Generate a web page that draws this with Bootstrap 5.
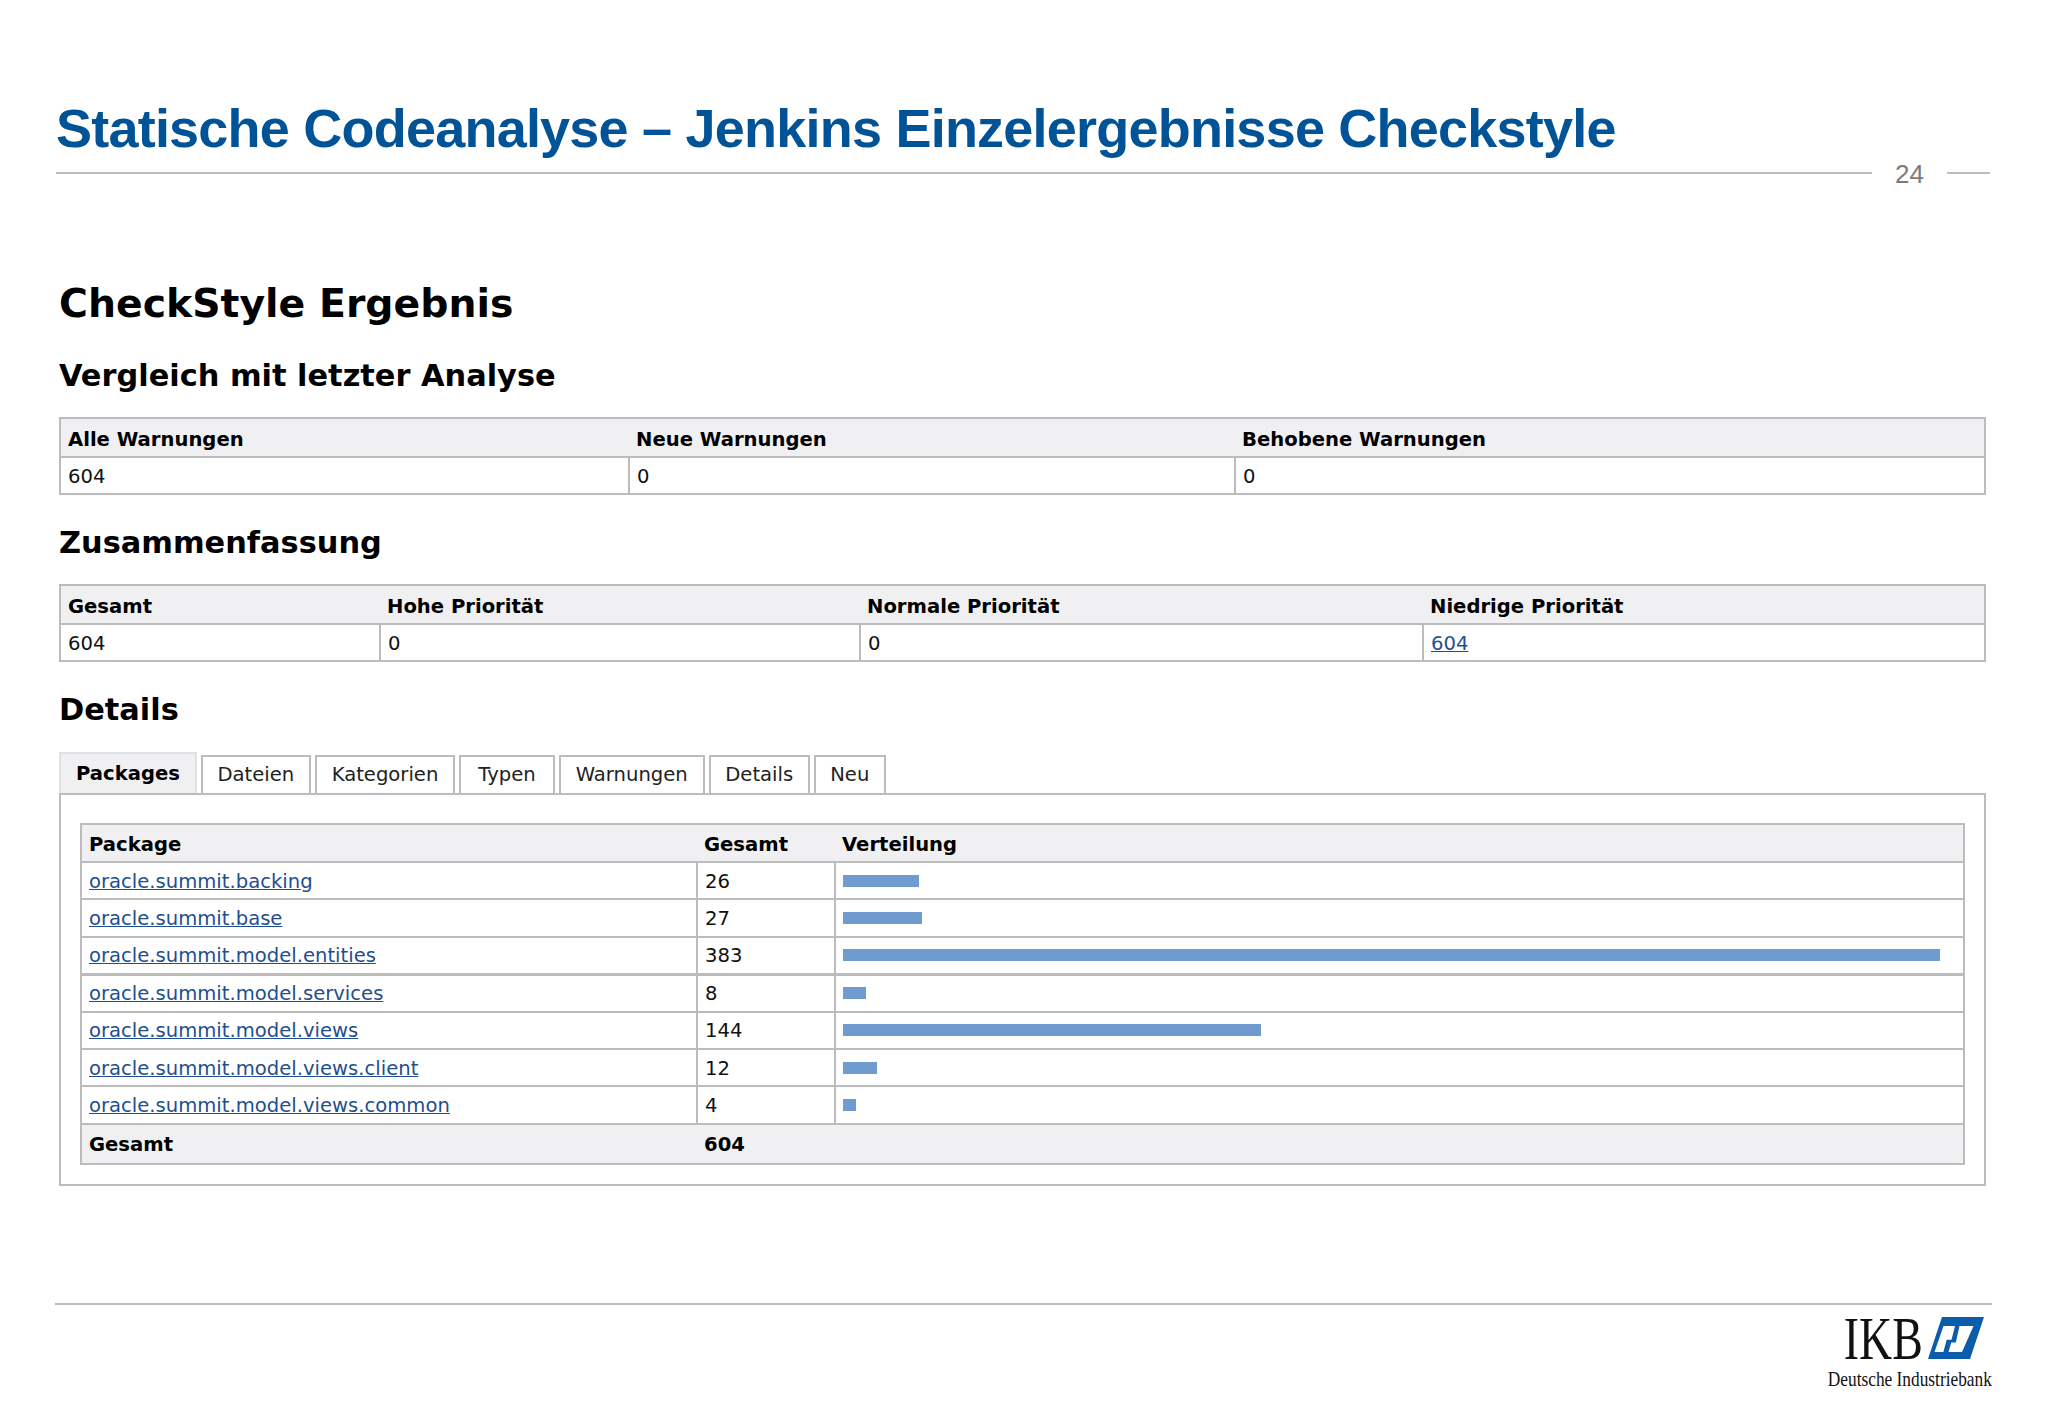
<!DOCTYPE html>
<html lang="de">
<head>
<meta charset="utf-8">
<title>Statische Codeanalyse</title>
<link href="https://cdn.jsdelivr.net/npm/bootstrap@5.3.0/dist/css/bootstrap.min.css" rel="stylesheet">
<style>
html,body{height:1418px;overflow:hidden;background:#fff}
.slide{height:1418px;padding:0 56px;display:flex;flex-direction:column;font-family:"DejaVu Sans",sans-serif;color:#111}
.slide-title{font:700 54px/62px "Liberation Sans",sans-serif;letter-spacing:-.78px;color:#005396;margin:97px 0 0}
.rule-row{display:flex;align-items:center;height:28px;margin-top:0;margin-right:-2px}
.rule{height:2px;background:#bcbcbc}
.rule-a{width:1816px}.rule-b{width:43px}
.page-no{width:75px;text-align:center;font:26px/28px "Liberation Sans",sans-serif;color:#7b7b7b;padding-top:2px}
.report{margin:0 -21px 0 3px;width:1927px}
.report h1{font-weight:700;font-size:39.4px;line-height:40px;margin:96px 0 0;color:#000;letter-spacing:0}
.report h2{font-weight:700;font-size:30.4px;line-height:32px;margin:0;color:#000}
.h-a{margin-top:37px !important}.h-b{margin-top:32px !important}.h-c{margin-top:32px !important}
.rt{table-layout:fixed;width:100%;margin:0;border-collapse:collapse;font-size:19.6px;color:#111}
.rt>*>tr>*{border:2px solid #bcbcbc;padding:2px 7px 0;vertical-align:middle;background:#fff;box-shadow:none;color:#111;line-height:22px}
.rt>thead>tr>th,.rt>tfoot>tr>*{background:#f0f0f2;font-weight:700;color:#000}
.rt>thead>tr>th{border-left-width:0;border-right-width:0;padding-top:4px}
.rt>thead>tr>th:first-child{border-left-width:2px}
.rt>thead>tr>th:last-child{border-right-width:2px}
.rt>tfoot>tr>*{border-left-width:0;border-right-width:0;padding-top:3px}
.rt>tfoot>tr>*:first-child{border-left-width:2px}
.rt>tfoot>tr>*:last-child{border-right-width:2px}
.t-top{margin-top:25px}
.t-top thead tr{height:39px}.t-top tbody tr{height:37px}
.c1a{width:569px}.c1b{width:606px}
.c2a{width:320px}.c2b{width:480px}.c2c{width:563px}
.rt a{color:#1f4f8f}
.tabs-row{margin-top:26px;border:0;gap:4px;align-items:flex-end;--bs-nav-tabs-border-width:0}
.tabs-row .nav-link{height:38px;padding:0 15px;font-size:19.6px;line-height:36px;color:#222;border:2px solid #bcbcbc;border-bottom:0;border-radius:0;background:#fff;margin:0}
.tabs-row .nav-link.active{height:41px;padding:0 15px;background:#f0f0f2;color:#000;font-weight:700;line-height:40px;border-right-width:2px}
.tabs-row .nav-link.tab-wide{padding:0 17px}
.tabs-row .nav-link.tab-tight{padding:0 14.5px}
.panel-box{border:2px solid #bcbcbc;padding:28px 19px 20px;height:393px}
.panel-box .rt>thead>tr{height:38px}
.panel-box .rt>tbody>tr{height:37.4px}
.panel-box .rt>tfoot>tr{height:40px}
.c3a{width:616px}.c3b{width:138px}
.heavy>td{border-bottom-width:3px !important}
.dist-bar{height:12px;background:#6f9bcf;margin-top:-2px}
.foot-rule{height:2px;background:#bcbcbc;margin-top:117px;margin-left:-1px}
.logo{align-self:flex-end;width:165px;display:flex;flex-direction:column;align-items:flex-end;font-family:"Liberation Serif",serif;color:#111}
.logo-top{display:flex;align-items:center;gap:5px;height:46px;margin-top:10px;margin-right:8px}
.logo-ikb{font-size:62px;line-height:46px;display:inline-block;transform:scaleX(.74);transform-origin:right center;letter-spacing:0}
.logo-sub{font-size:21px;line-height:24px;white-space:nowrap;transform:scaleX(.825);transform-origin:right center;margin-top:6px}
</style>
</head>
<body>
<div class="slide">
  <h1 class="slide-title">Statische Codeanalyse – Jenkins Einzelergebnisse Checkstyle</h1>
  <div class="rule-row"><div class="rule rule-a"></div><div class="page-no">24</div><div class="rule rule-b"></div></div>
  <div class="report">
    <h1>CheckStyle Ergebnis</h1>
    <h2 class="h-a">Vergleich mit letzter Analyse</h2>
    <table class="table rt t-top">
      <colgroup><col class="c1a"><col class="c1b"><col></colgroup>
      <thead><tr><th>Alle Warnungen</th><th>Neue Warnungen</th><th>Behobene Warnungen</th></tr></thead>
      <tbody><tr><td>604</td><td>0</td><td>0</td></tr></tbody>
    </table>
    <h2 class="h-b">Zusammenfassung</h2>
    <table class="table rt t-top">
      <colgroup><col class="c2a"><col class="c2b"><col class="c2c"><col></colgroup>
      <thead><tr><th>Gesamt</th><th>Hohe Priorität</th><th>Normale Priorität</th><th>Niedrige Priorität</th></tr></thead>
      <tbody><tr><td>604</td><td>0</td><td>0</td><td><a href="#">604</a></td></tr></tbody>
    </table>
    <h2 class="h-c">Details</h2>
    <ul class="nav nav-tabs tabs-row">
      <li class="nav-item"><a class="nav-link active" href="#">Packages</a></li>
      <li class="nav-item"><a class="nav-link tab-tight" href="#">Dateien</a></li>
      <li class="nav-item"><a class="nav-link" href="#">Kategorien</a></li>
      <li class="nav-item"><a class="nav-link tab-wide" href="#">Typen</a></li>
      <li class="nav-item"><a class="nav-link" href="#">Warnungen</a></li>
      <li class="nav-item"><a class="nav-link tab-tight" href="#">Details</a></li>
      <li class="nav-item"><a class="nav-link tab-tight" href="#">Neu</a></li>
    </ul>
    <div class="panel-box">
      <table class="table rt">
        <colgroup><col class="c3a"><col class="c3b"><col></colgroup>
        <thead><tr><th>Package</th><th>Gesamt</th><th>Verteilung</th></tr></thead>
        <tbody>
          <tr><td><a href="#">oracle.summit.backing</a></td><td>26</td><td><div class="dist-bar" style="width:76px"></div></td></tr>
          <tr><td><a href="#">oracle.summit.base</a></td><td>27</td><td><div class="dist-bar" style="width:79px"></div></td></tr>
          <tr class="heavy"><td><a href="#">oracle.summit.model.entities</a></td><td>383</td><td><div class="dist-bar" style="width:1097px"></div></td></tr>
          <tr><td><a href="#">oracle.summit.model.services</a></td><td>8</td><td><div class="dist-bar" style="width:23px"></div></td></tr>
          <tr><td><a href="#">oracle.summit.model.views</a></td><td>144</td><td><div class="dist-bar" style="width:418px"></div></td></tr>
          <tr><td><a href="#">oracle.summit.model.views.client</a></td><td>12</td><td><div class="dist-bar" style="width:34px"></div></td></tr>
          <tr><td><a href="#">oracle.summit.model.views.common</a></td><td>4</td><td><div class="dist-bar" style="width:13px"></div></td></tr>
        </tbody>
        <tfoot><tr><td>Gesamt</td><td>604</td><td></td></tr></tfoot>
      </table>
    </div>
  </div>
  <div class="foot-rule"></div>
  <div class="logo">
    <div class="logo-top">
      <span class="logo-ikb">IKB</span>
      <svg width="56" height="42" viewBox="0 0 56 42" role="img" aria-label="IKB Logo"><path d="M14 0H56L42 42H0Z" fill="#0b5cab"/><path d="M15.5 9H27L23.5 22.8H18.7L15.4 35H6.5Z" fill="#fff"/><path d="M31.5 9H45.5L34 35H20.5L23.2 25.5H27.8Z" fill="#fff"/></svg>
    </div>
    <div class="logo-sub">Deutsche Industriebank</div>
  </div>
</div>
<script src="https://cdn.jsdelivr.net/npm/bootstrap@5.3.0/dist/js/bootstrap.bundle.min.js"></script>
</body>
</html>
